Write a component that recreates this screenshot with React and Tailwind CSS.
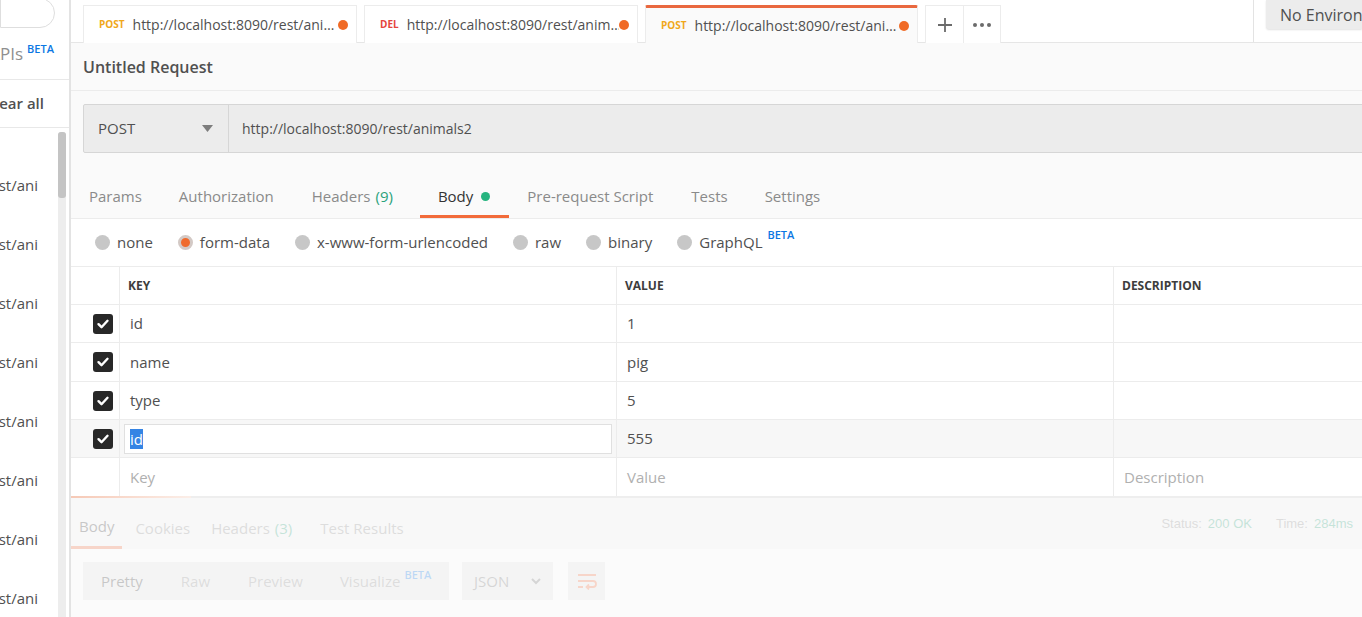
import React from "react";

const openTabs = [
  { method: "POST", color: "text-[#f0a81a]", url: "http://localhost:8090/rest/ani…", active: false, w: "w-[274px]" },
  { method: "DEL", color: "text-[#e5453d]", url: "http://localhost:8090/rest/anim…", active: false, w: "w-[274px]" },
  { method: "POST", color: "text-[#f0a81a]", url: "http://localhost:8090/rest/ani…", active: true, w: "w-[273px]" },
];

const reqTabs = [
  { label: "Params", pad: "pl-[18px] pr-[19px]" },
  { label: "Authorization", pad: "pl-[18px] pr-[19px]" },
  { label: "Headers", count: "(9)", pad: "pl-[19px] pr-[27px]" },
  { label: "Body", active: true, dot: true, pad: "pl-[18px] pr-[19px]" },
  { label: "Pre-request Script", pad: "pl-[18px] pr-[20px]" },
  { label: "Tests", pad: "pl-[18px] pr-[19px]" },
  { label: "Settings", pad: "px-[18px]" },
];

const bodyTypes = ["none", "form-data", "x-www-form-urlencoded", "raw", "binary", "GraphQL"];

const rows = [
  { key: "id", value: "1", h: "h-[38px]" },
  { key: "name", value: "pig", h: "h-[39px]" },
  { key: "type", value: "5", h: "h-[38px]" },
  { key: "id", value: "555", h: "h-[38px]", editing: true },
];

function Check() {
  return (
    <div className="w-[20px] h-[20px] rounded-[3px] bg-[#282828] flex items-center justify-center">
      <svg width="14" height="14" viewBox="0 0 14 14">
        <path d="M2.5 7.2l3 3L11.5 3.8" fill="none" stroke="white" strokeWidth="2.4" strokeLinecap="round" strokeLinejoin="round" />
      </svg>
    </div>
  );
}

export default function App() {
  return (
    <div className="flex h-[617px] w-[1362px] overflow-hidden bg-white font-['Open_Sans',sans-serif] text-[#505050]">
      {/* Sidebar - historial */}
      <div className="w-[71px] shrink-0 flex flex-col border-r-2 border-[#e3e3e3] bg-white">
        <div className="h-[28px] flex justify-end pr-[14px]">
          <div className="w-[80px] h-[30px] -mt-[2px] rounded-r-[15px] border border-[#dedede]"></div>
        </div>
        <div className="h-[52px] flex justify-end items-center pr-[15px] border-b border-[#e8e8e8] overflow-hidden whitespace-nowrap">
          <span className="text-[17px] text-[#8f8f8f]">APIs</span>
          <span className="ml-[4px] -mt-[8px] text-[11px] font-semibold text-[#0b77e3]">BETA</span>
        </div>
        <div className="h-[48px] flex justify-end items-center pr-[25px] border-b border-[#e8e8e8] overflow-hidden whitespace-nowrap">
          <span className="text-[15px] font-semibold">Clear all</span>
        </div>
        <div className="flex flex-1 min-h-0">
          <div className="w-[58px] pt-[28px] overflow-hidden">
            {Array.from({ length: 8 }).map((_, i) => (
              <div key={i} className="h-[59px] flex items-center justify-end pr-[20px] overflow-hidden whitespace-nowrap">
                <span className="text-[15px]">POST http://localhost:8090/rest/ani</span>
              </div>
            ))}
          </div>
          <div className="w-[8px] mt-[4px] bg-[#ededed] rounded-t-[3px]">
            <div className="h-[66px] rounded-[3px] bg-[#c4c4c4]"></div>
          </div>
        </div>
      </div>

      {/* Main */}
      <div className="flex-1 min-w-0 flex flex-col bg-[#fafafa] overflow-hidden">
        {/* Tab bar */}
        <div className="h-[43px] shrink-0 flex bg-white border-b border-[#e6e6e6] pl-[12px]">
          {openTabs.map((t, i) => (
            <div
              key={i}
              className={`${t.w} ${i > 0 ? "ml-[7px]" : ""} mt-[5px] h-[38px] flex items-center pl-[15px] pr-[8px] border-x border-t ${
                t.active ? "bg-[#fafafa] border-[#ececec] border-t-[3px] border-t-[#e9683f] rounded-t-[2px]" : "bg-white border-[#ececec]"
              }`}
            >
              <span className={`text-[10px] font-bold ${t.color}`}>{t.method}</span>
              <span className="ml-[8px] flex-1 text-[14px] whitespace-nowrap overflow-hidden">{t.url}</span>
              <span className="w-[10px] h-[10px] rounded-full bg-[#f06a25]"></span>
            </div>
          ))}
          <div className="ml-[7px] mt-[5px] h-[38px] flex border-x border-t border-[#ececec] bg-white">
            <div className="w-[38px] flex items-center justify-center border-r border-[#ececec]">
              <svg width="18" height="18" viewBox="0 0 18 18">
                <path d="M9 2v14M2 9h14" stroke="#6b6b6b" strokeWidth="1.8" />
              </svg>
            </div>
            <div className="w-[36px] flex items-center justify-center gap-[3px]">
              <span className="w-[4px] h-[4px] rounded-full bg-[#6b6b6b]"></span>
              <span className="w-[4px] h-[4px] rounded-full bg-[#6b6b6b]"></span>
              <span className="w-[4px] h-[4px] rounded-full bg-[#6b6b6b]"></span>
            </div>
          </div>
          <div className="flex-1"></div>
          <div className="w-px bg-[#e3e3e3]"></div>
          <div className="ml-[12px] w-[96px] h-[29px] bg-[#ececec] rounded-bl-[3px] shadow-[0_1px_2px_rgba(0,0,0,0.12)] flex items-center pl-[14px] overflow-hidden whitespace-nowrap">
            <span className="text-[16px]">No Environment</span>
          </div>
        </div>

        {/* Request name */}
        <div className="h-[48px] shrink-0 flex items-center pl-[12px] border-b border-[#ececec]">
          <span className="text-[16px] font-semibold">Untitled Request</span>
        </div>

        {/* URL bar */}
        <div className="pt-[13px] pl-[12px] shrink-0">
          <div className="h-[49px] -mr-[20px] flex bg-[#ececec] border border-[#d6d6d6] rounded-l-[2px]">
            <div className="w-[145px] flex items-center pl-[14px] pr-[15px] border-r border-[#d6d6d6]">
              <span className="text-[15px] flex-1">POST</span>
              <svg width="11" height="7" viewBox="0 0 11 7">
                <path d="M0 0h11L5.5 7z" fill="#7d7d7d" />
              </svg>
            </div>
            <div className="flex items-center pl-[13px] text-[14px]">http://localhost:8090/rest/animals2</div>
          </div>
        </div>

        {/* Request tabs */}
        <div className="h-[54px] mt-[12px] shrink-0 flex items-end border-b border-[#ececec]">
          {reqTabs.map((t) => (
            <div
              key={t.label}
              className={`h-[43px] pt-[2px] flex items-center ${t.pad} text-[15px] border-b-[3px] ${
                t.active ? "border-[#f26b3a] text-[#333333]" : "border-transparent text-[#8a8a8a]"
              }`}
            >
              <span>{t.label}</span>
              {t.count && <span className="ml-[5px] text-[#2aa27a]">{t.count}</span>}
              {t.dot && <span className="ml-[8px] w-[9px] h-[9px] rounded-full bg-[#26b47f]"></span>}
            </div>
          ))}
        </div>

        {/* Body type radios */}
        <div className="h-[48px] shrink-0 bg-white flex items-center pl-[24px] gap-[25px] border-b border-[#ececec]">
          {bodyTypes.map((b) => (
            <div key={b} className="flex items-center">
              {b === "form-data" ? (
                <span className="w-[15px] h-[15px] rounded-full bg-[#f06a2c] border-[3px] border-[#d3c9c5]"></span>
              ) : (
                <span className="w-[15px] h-[15px] rounded-full bg-[#c7c7c7]"></span>
              )}
              <span className="ml-[7px] text-[15px]">{b}</span>
              {b === "GraphQL" && (
                <span className="ml-[5px] -mt-[14px] text-[11px] font-semibold text-[#0b77e3]">BETA</span>
              )}
            </div>
          ))}
        </div>

        {/* Params table */}
        <div className="shrink-0 bg-white text-[15px]">
          <div className="h-[38px] grid grid-cols-[49px_497px_497px_1fr] border-b border-[#ececec]">
            <div className="border-r border-[#ececec]"></div>
            <div className="flex items-center pl-[8px] border-r border-[#ececec] text-[12px] font-bold text-[#3d3d3d]">KEY</div>
            <div className="flex items-center pl-[8px] border-r border-[#ececec] text-[12px] font-bold text-[#3d3d3d]">VALUE</div>
            <div className="flex items-center pl-[8px] text-[12px] font-bold text-[#3d3d3d]">DESCRIPTION</div>
          </div>
          {rows.map((r, i) => (
            <div
              key={i}
              className={`${r.h} grid grid-cols-[49px_497px_497px_1fr] border-b border-[#ececec] ${r.editing ? "bg-[#f7f7f7]" : ""}`}
            >
              <div className="flex items-center justify-end pr-[6px] border-r border-[#ececec]">
                <Check />
              </div>
              <div className="flex items-center pl-[4px] pr-[4px] border-r border-[#ececec]">
                {r.editing ? (
                  <div className="w-full h-[30px] flex items-center pl-[5px] bg-white border border-[#e0e0e0]">
                    <span className="bg-[#3584e4] text-white leading-[20px]">{r.key}</span>
                  </div>
                ) : (
                  <span className="pl-[6px]">{r.key}</span>
                )}
              </div>
              <div className="flex items-center pl-[10px] border-r border-[#ececec]">{r.value}</div>
              <div></div>
            </div>
          ))}
          <div className="h-[38px] grid grid-cols-[49px_497px_497px_1fr] text-[#b0b0b0]">
            <div className="border-r border-[#ececec]"></div>
            <div className="flex items-center pl-[10px] border-r border-[#ececec]">Key</div>
            <div className="flex items-center pl-[10px] border-r border-[#ececec]">Value</div>
            <div className="flex items-center pl-[10px]">Description</div>
          </div>
        </div>

        {/* Response (faded while loading) */}
        <div className="h-[2px] shrink-0 bg-[#eeeeee] flex">
          <div className="w-[120px] bg-gradient-to-r from-[#f6c9b6] to-[#fbeee8]"></div>
        </div>
        <div className="flex-1 bg-white opacity-[0.25]">
          <div className="h-[51px] flex items-end bg-[#f4f4f4] pr-[9px]">
            <div className="h-[48px] pt-[6px] flex items-center px-[8px] text-[15px] border-b-[3px] border-[#f26b3a] text-[#333]">Body</div>
            <div className="h-[48px] pt-[6px] ml-[13px] flex items-center text-[15px] text-[#8a8a8a]">Cookies</div>
            <div className="h-[48px] pt-[6px] ml-[21px] flex items-center text-[15px] text-[#8a8a8a]">
              Headers <span className="ml-[5px] text-[#2aa27a]">(3)</span>
            </div>
            <div className="h-[48px] pt-[6px] ml-[28px] flex items-center text-[15px] text-[#8a8a8a]">Test Results</div>
            <div className="flex-1"></div>
            <div className="h-[48px] pb-[2px] flex items-center font-['Liberation_Sans',sans-serif] text-[13px] text-[#8a8a8a]">
              <span>Status:</span>
              <span className="ml-[6px] text-[#2aa27a]">200 OK</span>
              <span className="ml-[24px]">Time:</span>
              <span className="ml-[6px] text-[#2aa27a]">284ms</span>
            </div>
          </div>
          <div className="pt-[13px] pl-[12px] flex items-center">
            <div className="h-[38px] w-[366px] flex items-center bg-[#e6e6e6] text-[15px] text-[#8a8a8a] pl-[18px]">
              <span className="text-[#333]">Pretty</span>
              <span className="ml-[38px]">Raw</span>
              <span className="ml-[38px]">Preview</span>
              <span className="ml-[37px]">Visualize</span>
              <span className="ml-[4px] -mt-[12px] text-[11px] font-semibold text-[#0b77e3]">BETA</span>
            </div>
            <div className="ml-[13px] h-[38px] w-[91px] flex items-center justify-between px-[12px] bg-[#e6e6e6] text-[15px] text-[#6b6b6b]">
              <span>JSON</span>
              <svg width="10" height="7" viewBox="0 0 10 7">
                <path d="M1 1l4 4 4-4" fill="none" stroke="#6b6b6b" strokeWidth="2" />
              </svg>
            </div>
            <div className="ml-[15px] h-[38px] w-[37px] flex items-center justify-center bg-[#e6e6e6]">
              <svg width="22" height="18" viewBox="0 0 22 18">
                <path d="M2 3h18M2 9h15a3 3 0 010 6h-5M2 15h5" fill="none" stroke="#f26b3a" strokeWidth="1.8" />
                <path d="M13 12.5l-2.5 2.5 2.5 2.5" fill="none" stroke="#f26b3a" strokeWidth="1.8" />
              </svg>
            </div>
          </div>
        </div>
      </div>
    </div>
  );
}
